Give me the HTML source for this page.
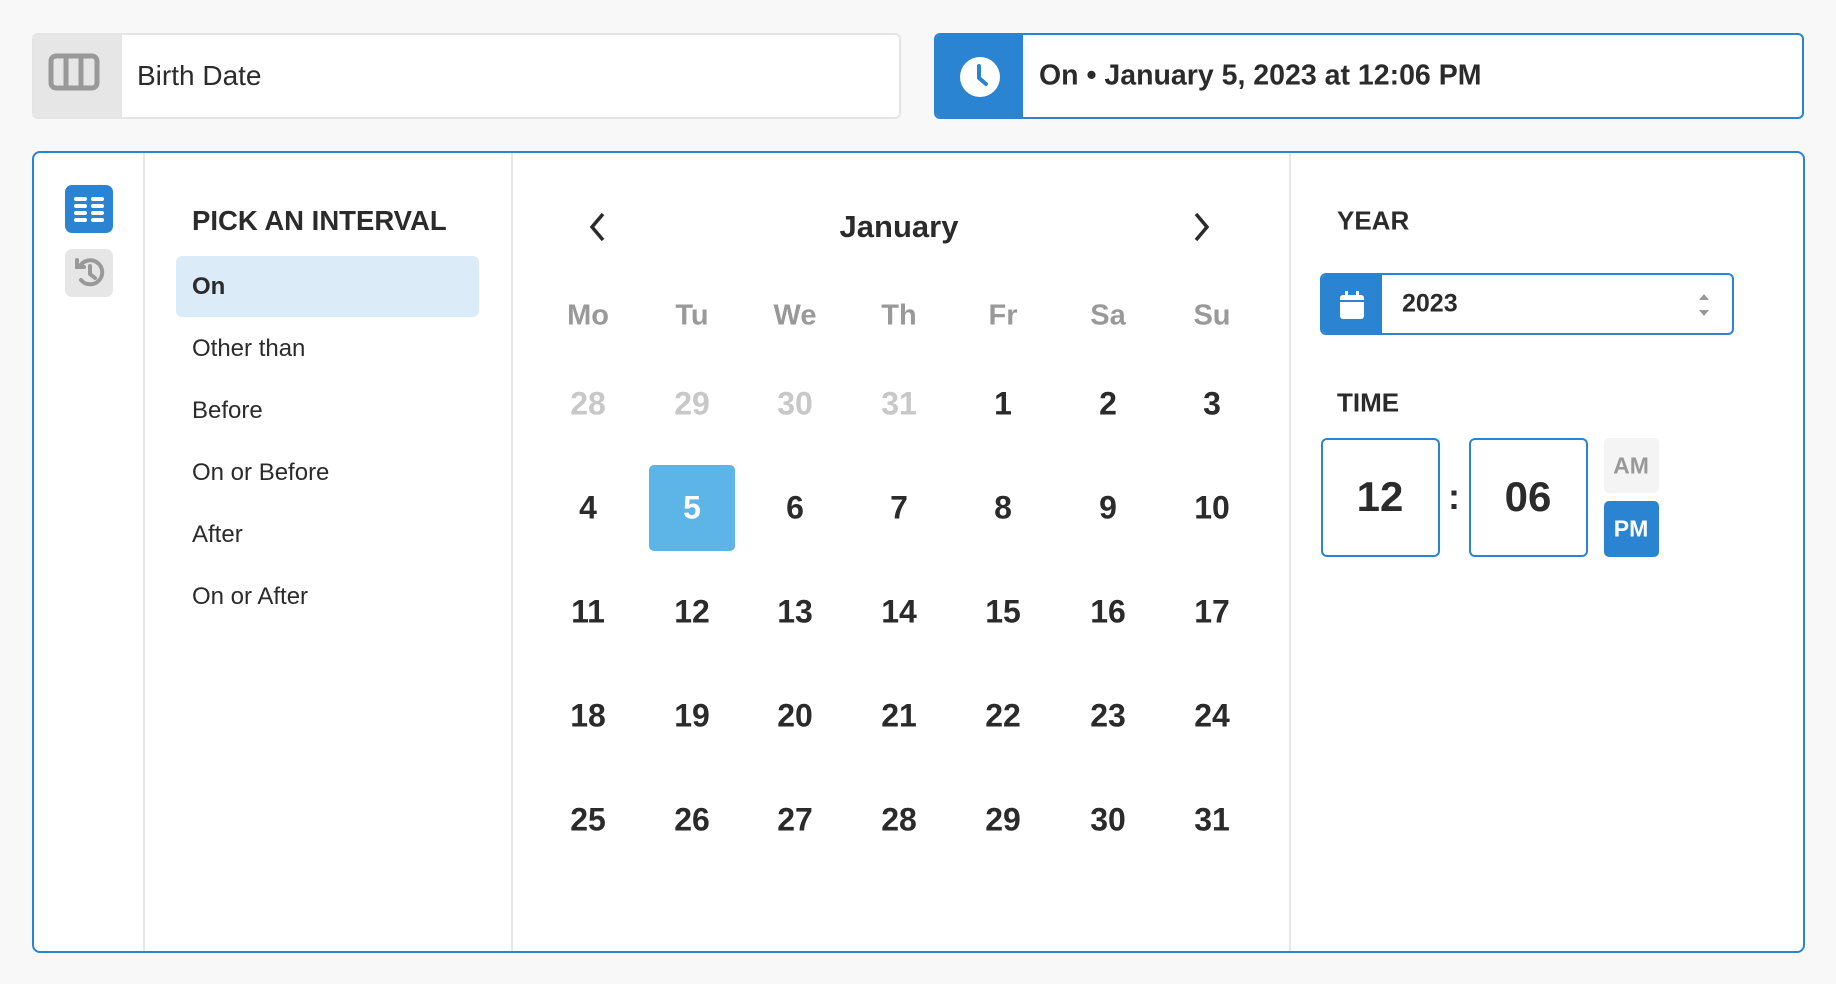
<!DOCTYPE html>
<html><head><meta charset="utf-8"><style>
*{box-sizing:border-box;margin:0;padding:0}
body{width:1836px;height:984px;background:#f8f8f8;font-family:"Liberation Sans",Arial,sans-serif;color:#2b2b2b;position:relative;overflow:hidden}
.abs{position:absolute}
.box1{left:32px;top:33px;width:869px;height:86px;border:2px solid #e4e4e4;border-radius:6px;background:#fff;overflow:hidden}
.box1 .ic{position:absolute;left:0;top:0;width:88px;height:100%;background:#e6e6e6}
.box2{left:934px;top:33px;width:870px;height:86px;border:2px solid #2a84d2;border-radius:6px;background:#fff;overflow:hidden}
.box2 .ic{position:absolute;left:0;top:0;width:87px;height:100%;background:#2a84d2}
.panel{left:32px;top:151px;width:1773px;height:802px;border:2px solid #2a84d2;border-radius:8px;background:#fff}
.in{position:absolute;left:-2px;top:-2px;width:1773px;height:802px}
.vl{position:absolute;top:2px;bottom:2px;width:2px;background:#e6e6e6}
.t{position:absolute;white-space:nowrap}
.item{font-size:24px;transform:translateY(-50%)}
.wd{font-size:29px;font-weight:bold;color:#999;transform:translate(-50%,-50%)}
.d{font-size:32px;font-weight:bold;transform:translate(-50%,-50%)}
.g{color:#c8c8c8}
</style></head><body>
<div class="abs box1"><div class="ic"><svg width="88" height="82" viewBox="0 0 88 82"><rect x="17" y="21" width="46" height="32" rx="5" fill="none" stroke="#999" stroke-width="5"/><path d="M32 21v32M47 21v32" stroke="#999" stroke-width="5"/></svg></div>
<div class="t" style="left:103px;top:41px;font-size:28px;transform:translateY(-50%)">Birth Date</div></div>
<div class="abs box2"><div class="ic"><svg width="87" height="82" viewBox="0 0 87 82"><circle cx="44" cy="42" r="20" fill="#fff"/><path d="M43 31v12l7 6" stroke="#2a84d2" stroke-width="4" fill="none" stroke-linecap="round"/></svg></div>
<div class="t" style="left:103px;top:41px;font-size:28.5px;font-weight:bold;transform:translateY(-50%)">On • January 5, 2023 at 12:06 PM</div></div>
<div class="abs panel"><div class="in">
<div class="vl" style="left:111px"></div><div class="vl" style="left:479px"></div><div class="vl" style="left:1257px"></div>
<svg class="abs" style="left:32px;top:33px" width="50" height="115" viewBox="0 0 50 115"><rect x="1" y="1" width="48" height="48" rx="7" fill="#2a84d2"/><g stroke="#fff" stroke-width="4" stroke-linecap="round"><path d="M12 15h9M29 15h9M12 22h9M29 22h9M12 29h9M29 29h9M12 36h9M29 36h9"/></g><rect x="1" y="65" width="48" height="48" rx="7" fill="#e6e6e6"/><g fill="none" stroke="#999" stroke-width="4" stroke-linecap="round"><path d="M16 82a12 12 0 1 1 1 14"/><path d="M26 82v8l5 4"/><path d="M13 76v7h7"/></g></svg>
<div class="t" style="left:160px;top:70px;font-size:27.5px;font-weight:bold;transform:translateY(-50%)">PICK AN INTERVAL</div>
<div class="abs" style="left:144px;top:105px;width:303px;height:61px;background:#dbebf8;border-radius:6px"></div>
<div class="t item" style="left:160px;top:136px;font-weight:bold">On</div>
<div class="t item" style="left:160px;top:198px">Other than</div>
<div class="t item" style="left:160px;top:260px">Before</div>
<div class="t item" style="left:160px;top:322px">On or Before</div>
<div class="t item" style="left:160px;top:384px">After</div>
<div class="t item" style="left:160px;top:446px">On or After</div>
<svg class="abs" style="left:556px;top:60px" width="20" height="32"><path d="M15 3L4 16l11 13" stroke="#2b2b2b" stroke-width="3.5" fill="none"/></svg>
<svg class="abs" style="left:1159px;top:60px" width="20" height="32"><path d="M5 3l11 13L5 29" stroke="#2b2b2b" stroke-width="3.5" fill="none"/></svg>
<div class="t" style="left:867px;top:76px;font-size:31px;font-weight:bold;transform:translate(-50%,-50%)">January</div>
<div id="cal"></div>
<div class="t" style="left:1305px;top:70px;font-size:26px;font-weight:bold;transform:translateY(-50%)">YEAR</div>
<div class="abs" style="left:1288px;top:122px;width:414px;height:62px;border:2px solid #2a84d2;border-radius:6px;overflow:hidden"><div class="abs" style="left:0;top:0;width:60px;height:100%;background:#2a84d2"></div>
<svg class="abs" style="left:15px;top:14px" width="30" height="32"><rect x="3" y="6" width="24" height="24" rx="3" fill="#fff"/><rect x="8" y="2" width="3" height="7" fill="#fff"/><rect x="19" y="2" width="3" height="7" fill="#fff"/><rect x="3" y="11" width="24" height="2" fill="#2a84d2"/></svg>
<div class="t" style="left:80px;top:29px;font-size:25px;font-weight:bold;transform:translateY(-50%)">2023</div>
<svg class="abs" style="left:374px;top:16px" width="16" height="28"><path d="M3 9l5-6 5 6zM3 19l5 6 5-6z" fill="#999"/></svg></div>
<div class="t" style="left:1305px;top:252px;font-size:26px;font-weight:bold;transform:translateY(-50%)">TIME</div>
<div class="abs" style="left:1289px;top:287px;width:119px;height:119px;border:2px solid #2a84d2;border-radius:6px"></div>
<div class="t" style="left:1348px;top:346px;font-size:42px;font-weight:bold;transform:translate(-50%,-50%)">12</div>
<div class="t" style="left:1422px;top:346px;font-size:36px;font-weight:bold;transform:translate(-50%,-50%)">:</div>
<div class="abs" style="left:1437px;top:287px;width:119px;height:119px;border:2px solid #2a84d2;border-radius:6px"></div>
<div class="t" style="left:1496px;top:346px;font-size:42px;font-weight:bold;transform:translate(-50%,-50%)">06</div>
<div class="abs" style="left:1572px;top:287px;width:55px;height:55px;background:#f4f4f4;border-radius:5px"></div>
<div class="t" style="left:1599px;top:315px;font-size:23px;font-weight:bold;color:#999;transform:translate(-50%,-50%)">AM</div>
<div class="abs" style="left:1572px;top:350px;width:55px;height:56px;background:#2a84d2;border-radius:5px"></div>
<div class="t" style="left:1599px;top:378px;font-size:23px;font-weight:bold;color:#fff;transform:translate(-50%,-50%)">PM</div>
</div></div>
<script>
var c=document.getElementById('cal'),h='';
var xs=[556,660,763,867,971,1076,1180];
['Mo','Tu','We','Th','Fr','Sa','Su'].forEach(function(w,i){h+='<div class="t wd" style="left:'+xs[i]+'px;top:165px">'+w+'</div>'});
var days=[28,29,30,31];for(var i=1;i<=31;i++)days.push(i);
h+='<div class="abs" style="left:617px;top:314px;width:86px;height:86px;background:#5db4e6;border-radius:5px"></div>';
days.forEach(function(d,k){var r=Math.floor(k/7),col=k%7;var cls=k<4?'d g':'d';var st='';if(k==8)st='color:#fff;';
h+='<div class="t '+cls+'" style="'+st+'left:'+xs[col]+'px;top:'+(253+r*104)+'px">'+d+'</div>'});
c.innerHTML=h;
</script>
</body></html>
